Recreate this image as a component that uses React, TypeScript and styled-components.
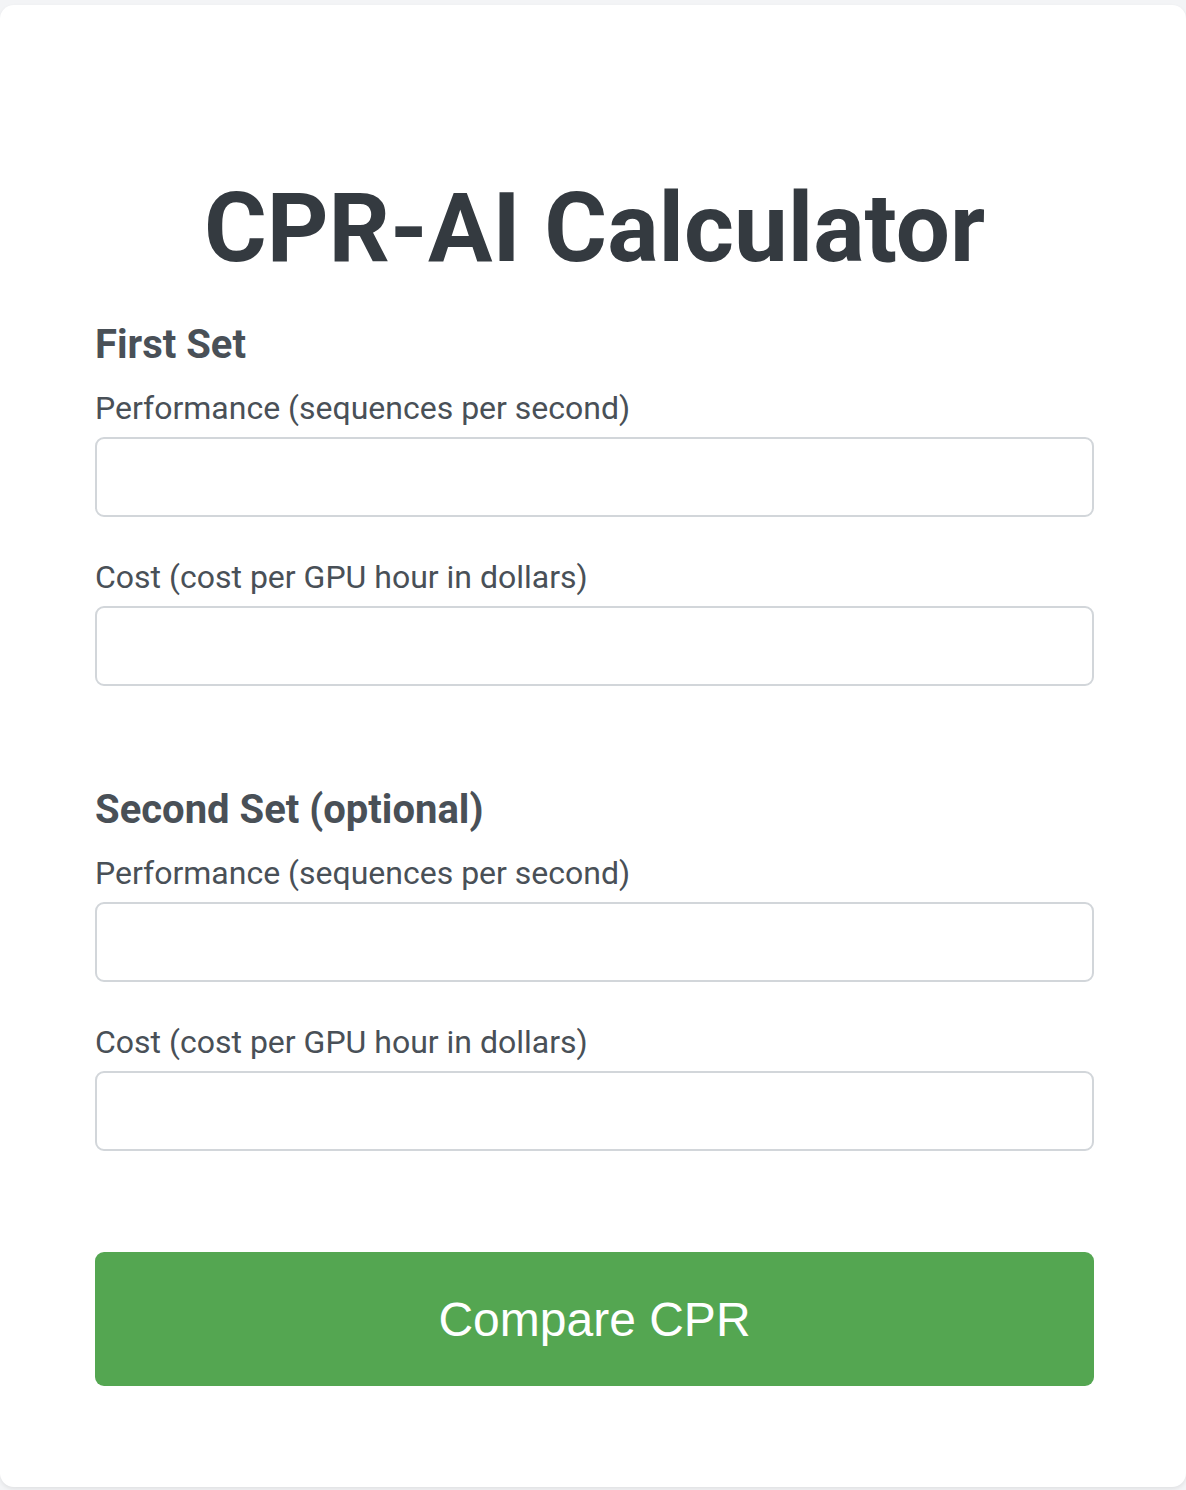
import React from "react";
import styled, { createGlobalStyle } from "styled-components";

const GlobalStyle = createGlobalStyle`
  html, body {
    margin: 0;
    padding: 0;
    background: #f3f4f6;
  }
  body {
    font-family: Roboto, "Noto Sans", Arial, sans-serif;
  }
  * { box-sizing: border-box; }
`;

const Page = styled.div`
  padding-top: 5px;
  min-height: 1490px;
`;

const Card = styled.main`
  width: 1186px;
  background: #ffffff;
  border-radius: 14px;
  box-shadow: 0 2px 4px rgba(0, 0, 0, 0.08);
  padding: 163px 92px 101px 95px;
  display: flex;
  flex-direction: column;
`;

const Title = styled.h1`
  margin: 0 0 33px;
  font-family: Roboto, Arial, sans-serif;
  font-weight: 700;
  font-size: 96px;
  line-height: 120px;
  color: #343a40;
  text-align: center;
`;

const Section = styled.section`
  display: flex;
  flex-direction: column;
  margin-bottom: 59px;
`;

const SectionHeading = styled.h2`
  margin: 0 0 20px;
  font-family: Roboto, Arial, sans-serif;
  font-weight: 700;
  font-size: 40px;
  line-height: 48px;
  color: #495057;
`;

const Field = styled.div`
  display: flex;
  flex-direction: column;
  margin-bottom: 41px;
`;

const Label = styled.label`
  font-family: Roboto, Arial, sans-serif;
  font-size: 32px;
  line-height: 38px;
  color: #495057;
  margin-bottom: 10px;
`;

const Input = styled.input`
  width: 100%;
  height: 80px;
  border: 2px solid #d2d6da;
  border-radius: 9px;
  background: #ffffff;
  padding: 0 20px;
  font-size: 32px;
  font-family: Roboto, Arial, sans-serif;
  color: #495057;
  outline: none;
`;

const Button = styled.button`
  margin-top: 1px;
  width: 100%;
  height: 134px;
  border: none;
  border-radius: 9px;
  background: #54a651;
  color: #ffffff;
  font-family: "Liberation Sans", Arial, sans-serif;
  font-size: 48px;
  cursor: pointer;
`;

type FieldDef = { id: string; label: string };

const InputSet: React.FC<{ title: string; prefix: string }> = ({ title, prefix }) => {
  const fields: FieldDef[] = [
    { id: `${prefix}-perf`, label: "Performance (sequences per second)" },
    { id: `${prefix}-cost`, label: "Cost (cost per GPU hour in dollars)" },
  ];
  return (
    <Section>
      <SectionHeading>{title}</SectionHeading>
      {fields.map((f) => (
        <Field key={f.id}>
          <Label htmlFor={f.id}>{f.label}</Label>
          <Input id={f.id} type="number" />
        </Field>
      ))}
    </Section>
  );
};

export default function App() {
  return (
    <>
      <GlobalStyle />
      <Page>
        <Card>
          <Title>CPR-AI Calculator</Title>
          <InputSet title="First Set" prefix="first" />
          <InputSet title="Second Set (optional)" prefix="second" />
          <Button type="button">Compare CPR</Button>
        </Card>
      </Page>
    </>
  );
}
